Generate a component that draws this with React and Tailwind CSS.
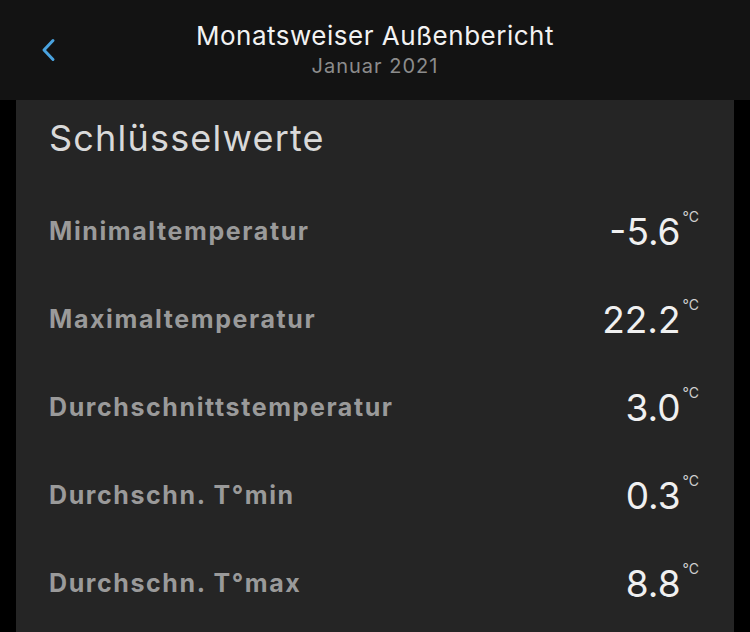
import React from 'react';

const rows = [
  { label: 'Minimaltemperatur', value: '-5.6' },
  { label: 'Maximaltemperatur', value: '22.2' },
  { label: 'Durchschnittstemperatur', value: '3.0' },
  { label: 'Durchschn. T°min', value: '0.3' },
  { label: 'Durchschn. T°max', value: '8.8' },
];

export default function App() {
  return (
    <div className="w-[750px] h-[632px] overflow-hidden bg-black flex flex-col" style={{ fontFamily: 'Inter, "Liberation Sans", sans-serif' }}>
      {/* header */}
      <div className="h-[100px] shrink-0 bg-[#131313] relative flex flex-col items-center pt-[19px]">
        <svg className="absolute left-[39px] top-[38px]" width="18" height="24" viewBox="0 0 18 24" fill="none">
          <path d="M14 2.5 L5 12 L14 21.5" stroke="#4aa3df" strokeWidth="3" strokeLinecap="round" strokeLinejoin="round" />
        </svg>
        <div className="text-[26px] leading-[34px] tracking-[0.5px] text-[#f2f2f2]">Monatsweiser Außenbericht</div>
        <div className="text-[20px] leading-[26px] tracking-[1px] text-[#8c8c8c]">Januar 2021</div>
      </div>

      {/* card */}
      <div className="flex-1 mx-[16px] bg-[#252525] px-[33px] pt-[12px]">
        <h1 className="text-[36px] leading-[52px] tracking-[1.2px] text-[#d9d9d9] font-normal">Schlüsselwerte</h1>
        <div className="mt-[24px] flex flex-col">
          {rows.map((r) => (
            <div key={r.label} className="h-[88px] flex items-center justify-between">
              <div className="text-[25px] tracking-[1.6px] font-bold text-[#9a9a9a]">{r.label}</div>
              <div className="flex items-start pr-[2px]">
                <span className="text-[37px] leading-[48px] text-[#f0f0f0] font-normal">{r.value}</span>
                <span className="text-[14px] leading-[14px] text-[#cfcfcf] ml-[2px] mt-[2px]">°C</span>
              </div>
            </div>
          ))}
        </div>
      </div>
    </div>
  );
}
